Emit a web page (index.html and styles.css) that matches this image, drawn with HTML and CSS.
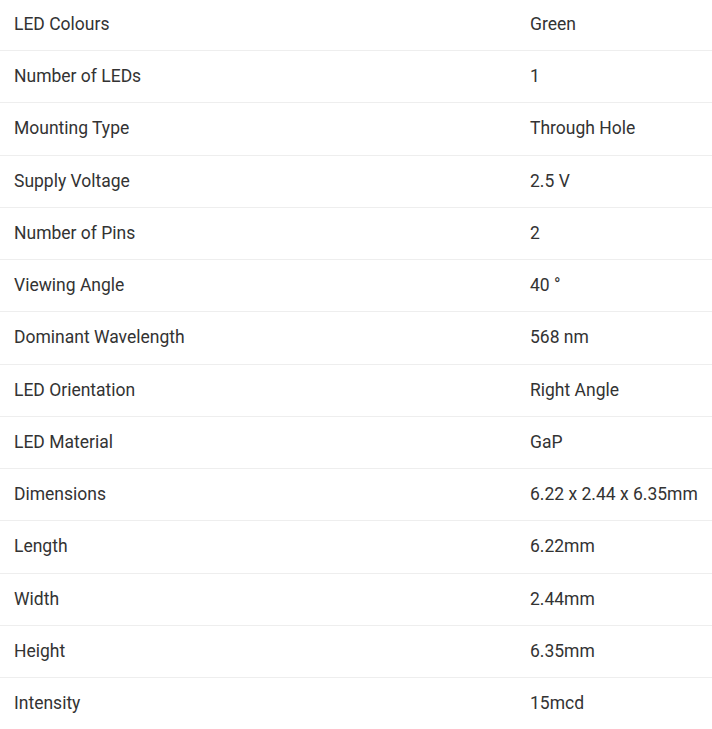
FILE: index.html
```html
<!DOCTYPE html>
<html>
<head>
<meta charset="utf-8">
<link rel="stylesheet" href="styles.css">
</head>
<body>
<div class="specs">
  <div class="row"><div class="label">LED Colours</div><div class="value">Green</div></div>
  <div class="row"><div class="label">Number of LEDs</div><div class="value">1</div></div>
  <div class="row"><div class="label">Mounting Type</div><div class="value">Through Hole</div></div>
  <div class="row"><div class="label">Supply Voltage</div><div class="value">2.5 V</div></div>
  <div class="row"><div class="label">Number of Pins</div><div class="value">2</div></div>
  <div class="row"><div class="label">Viewing Angle</div><div class="value">40 °</div></div>
  <div class="row"><div class="label">Dominant Wavelength</div><div class="value">568 nm</div></div>
  <div class="row"><div class="label">LED Orientation</div><div class="value">Right Angle</div></div>
  <div class="row"><div class="label">LED Material</div><div class="value">GaP</div></div>
  <div class="row"><div class="label">Dimensions</div><div class="value">6.22 x 2.44 x 6.35mm</div></div>
  <div class="row"><div class="label">Length</div><div class="value">6.22mm</div></div>
  <div class="row"><div class="label">Width</div><div class="value">2.44mm</div></div>
  <div class="row"><div class="label">Height</div><div class="value">6.35mm</div></div>
  <div class="row"><div class="label">Intensity</div><div class="value">15mcd</div></div>
</div>
</body>
</html>
```
FILE: styles.css
```css
html, body {
  margin: 0;
  padding: 0;
  background: #fff;
}
body {
  font-family: Roboto, "Liberation Sans", sans-serif;
  font-size: 17.5px;
  color: #333;
  overflow: hidden;
}
.specs {
  margin-top: -1.25px;
}
.row {
  display: grid;
  grid-template-columns: 516px 1fr;
  align-items: center;
  height: 51.25px;
  padding-bottom: 1px;
  box-sizing: border-box;
  border-bottom: 1px solid #eeeeee;
  height: 52.25px;
}
.label {
  padding-left: 14px;
}
.value {
  padding-left: 14px;
}
```
